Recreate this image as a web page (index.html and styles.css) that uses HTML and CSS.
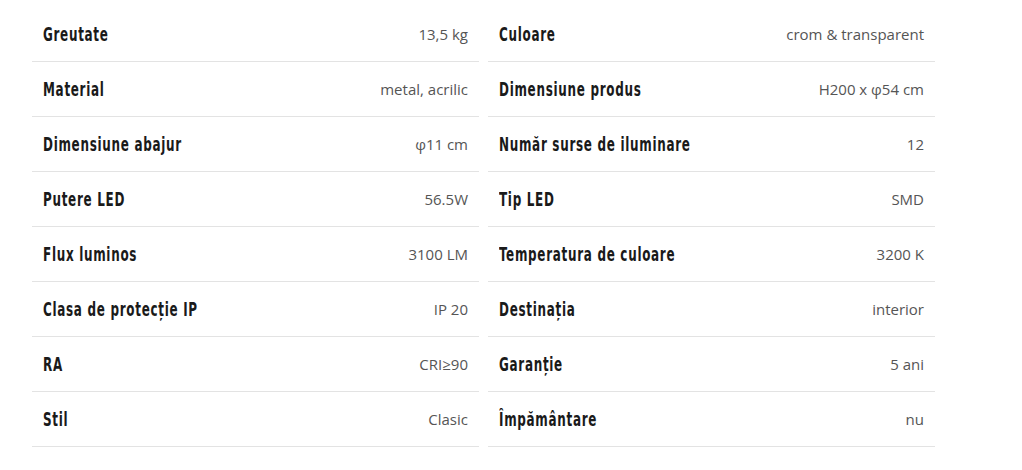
FILE: index.html
```html
<!DOCTYPE html>
<html lang="ro">
<head>
    <meta charset="UTF-8">
    <meta name="viewport" content="width=device-width, initial-scale=1.0">
    <title>Specificații</title>
    <link rel="stylesheet" href="styles.css">
</head>
<body>
    <div class="specs">
        <div class="spec-col">
            <div class="spec-row"><span class="spec-label">Greutate</span><span class="spec-value">13,5 kg</span></div>
            <div class="spec-row"><span class="spec-label">Material</span><span class="spec-value">metal, acrilic</span></div>
            <div class="spec-row"><span class="spec-label">Dimensiune abajur</span><span class="spec-value">φ11 cm</span></div>
            <div class="spec-row"><span class="spec-label">Putere LED</span><span class="spec-value">56.5W</span></div>
            <div class="spec-row"><span class="spec-label">Flux luminos</span><span class="spec-value">3100 LM</span></div>
            <div class="spec-row"><span class="spec-label">Clasa de protecție IP</span><span class="spec-value">IP 20</span></div>
            <div class="spec-row"><span class="spec-label">RA</span><span class="spec-value">CRI≥90</span></div>
            <div class="spec-row"><span class="spec-label">Stil</span><span class="spec-value">Clasic</span></div>
        </div>
        <div class="spec-col">
            <div class="spec-row"><span class="spec-label">Culoare</span><span class="spec-value">crom &amp; transparent</span></div>
            <div class="spec-row"><span class="spec-label">Dimensiune produs</span><span class="spec-value">H200 x φ54 cm</span></div>
            <div class="spec-row"><span class="spec-label">Număr surse de iluminare</span><span class="spec-value">12</span></div>
            <div class="spec-row"><span class="spec-label">Tip LED</span><span class="spec-value">SMD</span></div>
            <div class="spec-row"><span class="spec-label">Temperatura de culoare</span><span class="spec-value">3200 K</span></div>
            <div class="spec-row"><span class="spec-label">Destinația</span><span class="spec-value">interior</span></div>
            <div class="spec-row"><span class="spec-label">Garanție</span><span class="spec-value">5 ani</span></div>
            <div class="spec-row"><span class="spec-label">Împământare</span><span class="spec-value">nu</span></div>
        </div>
    </div>
</body>
</html>
```

FILE: styles.css
```css
body {
    margin: 0;
    padding: 7px 0 0 32px;
    background: #ffffff;
    font-family: 'Open Sans', sans-serif;
}

.specs {
    display: grid;
    grid-template-columns: 447px 447px;
    column-gap: 9px;
}

.spec-row {
    display: flex;
    justify-content: space-between;
    align-items: center;
    height: 54px;
    padding: 0 11px 0 11px;
    border-bottom: 1px solid #e3e3e3;
}

/* condensed heading look, no Oswald available offline */
.spec-label {
    display: inline-block;
    font-family: 'DejaVu Sans Condensed', sans-serif;
    font-weight: bold;
    font-size: 19px;
    letter-spacing: 1px;
    color: #1a1a1a;
    white-space: nowrap;
    transform: scaleX(0.7);
    transform-origin: left center;
}

.spec-value {
    font-size: 15px;
    color: #555555;
}
```
